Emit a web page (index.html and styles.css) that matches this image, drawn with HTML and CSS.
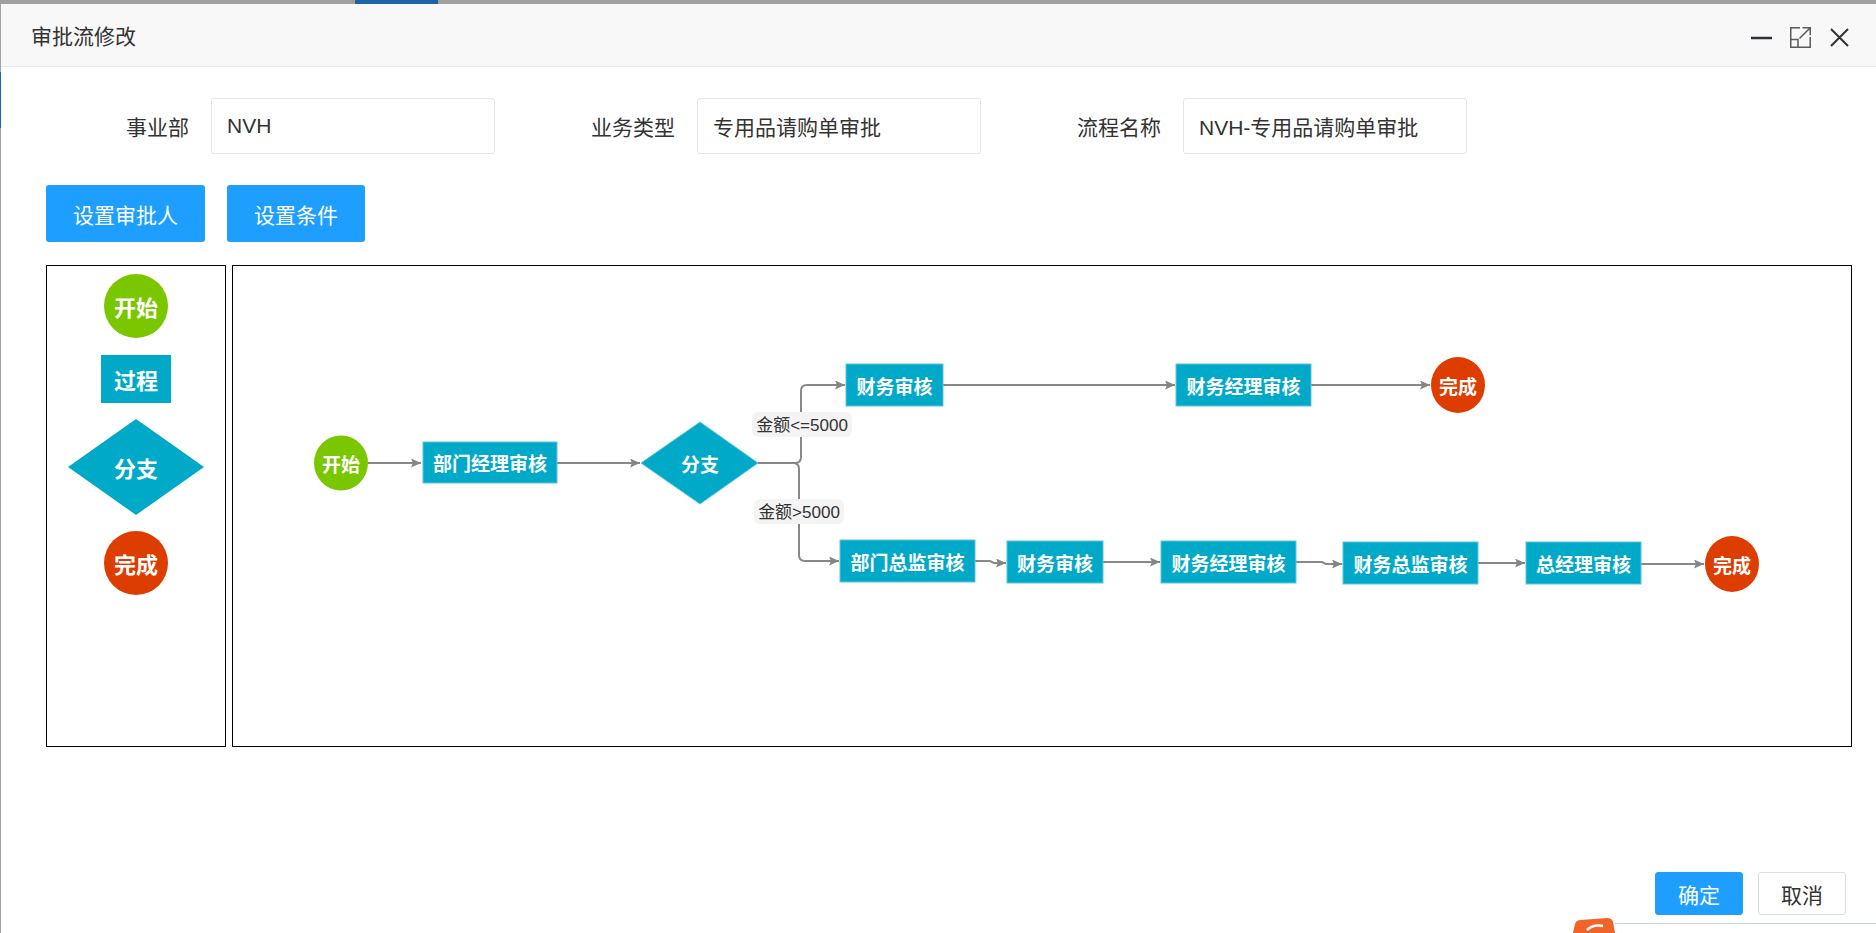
FILE: index.html
```html
<!DOCTYPE html>
<html lang="zh-CN">
<head>
  <meta charset="UTF-8">
  <title>审批流修改</title>
  <link rel="stylesheet" href="styles.css">
</head>
<body>
  <div class="top-strip"></div>
  <div class="dialog">
    <!-- 标题栏 -->
    <div class="dialog-head">
      <span class="dialog-title">审批流修改</span>
      <div class="win-tools">
        <svg class="tool" viewBox="0 0 21 26"><path d="M0 16h21" stroke="#2f2e3b" stroke-width="2.5"/></svg>
        <svg class="tool" viewBox="0 0 21 26" fill="none" stroke="#5b5b5b" stroke-width="1.5">
          <path d="M10 5.75H.75v19.5h19.5V15"/>
          <path d="M.75 17.5H8v7.75"/>
          <path d="M12.5 5.75h7.75v7.5M20.25 5.75 9.5 16.5"/>
        </svg>
        <svg class="tool" viewBox="0 0 21 26"><path d="M2 7l17 17M19 7 2 24" stroke="#333" stroke-width="2"/></svg>
      </div>
    </div>

    <div class="dialog-body">
      <!-- 基本信息 -->
      <div class="form-row">
        <div class="form-item">
          <label class="form-label">事业部</label>
          <input class="form-input" type="text" value="NVH">
        </div>
        <div class="form-item">
          <label class="form-label">业务类型</label>
          <input class="form-input" type="text" value="专用品请购单审批">
        </div>
        <div class="form-item">
          <label class="form-label">流程名称</label>
          <input class="form-input" type="text" value="NVH-专用品请购单审批">
        </div>
      </div>

      <div class="toolbar">
        <button class="btn">设置审批人</button>
        <button class="btn">设置条件</button>
      </div>

      <div class="panels">
        <!-- 左侧图形 -->
        <div class="palette">
          <div class="shape p-start">开始</div>
          <div class="shape p-proc">过程</div>
          <div class="shape p-branch">分支</div>
          <div class="shape p-end">完成</div>
        </div>

        <!-- 流程画布 -->
        <div class="canvas-box">
          <svg class="canvas" viewBox="233 266 1618 480">
            <defs>
              <marker id="arr" viewBox="0 0 10 9" refX="10" refY="4.5" markerWidth="10" markerHeight="9" markerUnits="userSpaceOnUse" orient="auto">
                <path d="M0 0L10 4.5 0 9 2 4.5z" fill="#858585"/>
              </marker>
            </defs>

            <g class="edges">
              <path d="M368 463H421" marker-end="url(#arr)"/>
              <path d="M557 463H640" marker-end="url(#arr)"/>
              <path d="M758 463H795Q801 463 801 457V391Q801 385 807 385H845" marker-end="url(#arr)"/>
              <path d="M758 463H793Q799 463 799 469V555Q799 561 805 561H839" marker-end="url(#arr)"/>
              <path d="M943 385H1175" marker-end="url(#arr)"/>
              <path d="M1311 385H1430" marker-end="url(#arr)"/>
              <path d="M975 561H990L994 563H1006" marker-end="url(#arr)"/>
              <path d="M1103 562H1160" marker-end="url(#arr)"/>
              <path d="M1296 562H1322L1326 564H1342" marker-end="url(#arr)"/>
              <path d="M1478 563H1525" marker-end="url(#arr)"/>
              <path d="M1641 564H1704" marker-end="url(#arr)"/>
            </g>

            <g class="conds">
              <rect x="752" y="412" width="100" height="25" rx="6"/>
              <text x="802" y="425">金额&lt;=5000</text>
              <rect x="754" y="499" width="90" height="25" rx="6"/>
              <text x="799" y="512">金额&gt;5000</text>
            </g>

            <g class="nodes">
              <ellipse class="n-start" cx="341" cy="463" rx="27" ry="27.5"/>
              <text x="341" y="463">开始</text>

              <rect class="n-proc" x="423" y="442" width="134" height="41"/>
              <text x="490" y="462.5">部门经理审核</text>

              <polygon class="n-proc" points="641,463 700,422 758,463 700,504"/>
              <text x="700" y="463">分支</text>

              <rect class="n-proc" x="846" y="364" width="97" height="42"/>
              <text x="894.5" y="385">财务审核</text>
              <rect class="n-proc" x="1176" y="364" width="135" height="42"/>
              <text x="1243.5" y="385">财务经理审核</text>
              <ellipse class="n-end" cx="1458" cy="385" rx="27" ry="28"/>
              <text x="1458" y="385">完成</text>

              <rect class="n-proc" x="840" y="540" width="135" height="42"/>
              <text x="907.5" y="561">部门总监审核</text>
              <rect class="n-proc" x="1007" y="541" width="96" height="42"/>
              <text x="1055" y="562">财务审核</text>
              <rect class="n-proc" x="1161" y="541" width="135" height="42"/>
              <text x="1228.5" y="562">财务经理审核</text>
              <rect class="n-proc" x="1343" y="542" width="135" height="42"/>
              <text x="1410.5" y="563">财务总监审核</text>
              <rect class="n-proc" x="1526" y="542" width="115" height="42"/>
              <text x="1583.5" y="563">总经理审核</text>
              <ellipse class="n-end" cx="1732" cy="564" rx="27" ry="28"/>
              <text x="1732" y="564">完成</text>
            </g>
          </svg>
        </div>
      </div>
    </div>

    <!-- 底部按钮 -->
    <div class="dialog-foot">
      <button class="foot-btn primary">确定</button>
      <button class="foot-btn">取消</button>
    </div>

    <div class="bottom-bar">
      <svg class="ime-badge" viewBox="0 0 42 15">
        <path d="M2 6Q3 2 8 2L34 0Q39 0 40 4L42 15H0z" fill="#f0642a"/>
        <path d="M14 12Q20 6 30 8" stroke="#fff" stroke-width="2.5" fill="none"/>
      </svg>
      <div class="taskline"></div>
    </div>
  </div>
</body>
</html>
```

FILE: styles.css
```css
* {
  box-sizing: border-box;
}

body {
  margin: 0;
  height: 100vh;
  display: flex;
  flex-direction: column;
  overflow: hidden;
  background: #fff;
  color: #333;
  font-family: "Liberation Sans", "Noto Sans CJK SC", sans-serif;
  font-size: 21px;
}

/* 背景窗口露出的边 */
.top-strip {
  height: 4px;
  flex-shrink: 0;
  background: linear-gradient(to right, #a0a0a0 355px, #1d64a6 355px, #1d64a6 438px, #a0a0a0 438px);
}

.dialog {
  flex: 1;
  display: flex;
  flex-direction: column;
  padding-left: 1px;
  background: linear-gradient(to bottom, #a3a3a3 68px, #1d64a6 68px, #1d64a6 124px, #a3a3a3 124px) left top / 1px 100% no-repeat, #fff;
}

/* 标题栏 */
.dialog-head {
  height: 63px;
  flex-shrink: 0;
  display: flex;
  align-items: center;
  justify-content: space-between;
  padding: 0 26px 0 30px;
  background: #f8f8f8;
  border-bottom: 1px solid #eaeaea;
}

.dialog-title {
  font-family: "Noto Sans CJK SC", sans-serif;
  font-size: 21px;
  color: #333;
}

.win-tools {
  display: flex;
  gap: 18px;
}

.tool {
  display: block;
  width: 21px;
  height: 26px;
}

.dialog-body {
  flex: 1;
  padding: 0 24px 0 45px;
}

/* 表单 */
.form-row {
  display: flex;
  gap: 82px;
  margin-top: 31px;
  padding-left: 45px;
}

.form-item {
  display: flex;
  align-items: center;
}

.form-label {
  width: 120px;
  padding-right: 22px;
  text-align: right;
  color: #333;
}

.form-input {
  width: 284px;
  height: 56px;
  padding: 0 15px;
  border: 1px solid #e6e6e6;
  border-radius: 3px;
  background: #fff;
  color: #333;
  font: inherit;
  outline: none;
}

/* 按钮 */
.toolbar {
  display: flex;
  gap: 22px;
  margin-top: 31px;
}

.btn {
  height: 57px;
  padding: 0 27px;
  border: none;
  border-radius: 3px;
  background: #1e9fff;
  color: #fff;
  font: inherit;
  cursor: pointer;
}

/* 图形区 */
.panels {
  display: flex;
  gap: 6px;
  height: 482px;
  margin-top: 23px;
}

.palette {
  width: 180px;
  flex-shrink: 0;
  border: 1px solid #000;
  display: flex;
  flex-direction: column;
  align-items: center;
  gap: 16px;
  padding-top: 8px;
}

.shape {
  display: flex;
  align-items: center;
  justify-content: center;
  color: #fff;
  font-family: "Noto Sans CJK SC", sans-serif;
  font-weight: 700;
  font-size: 22px;
}

.p-start {
  width: 64px;
  height: 64px;
  border-radius: 50%;
  background: #7ac700;
}

.p-proc {
  width: 70px;
  height: 48px;
  margin-top: 1px;
  background: #01a9c9;
}

.p-branch {
  width: 136px;
  height: 96px;
  background: #01a9c9;
  clip-path: polygon(50% 0, 100% 50%, 50% 100%, 0 50%);
}

.p-end {
  width: 64px;
  height: 64px;
  border-radius: 50%;
  background: #de3d00;
}

.canvas-box {
  flex: 1;
  border: 1px solid #000;
}

.canvas {
  display: block;
  width: 100%;
  height: 100%;
}

.edges path {
  fill: none;
  stroke: #888;
  stroke-width: 2;
}

.conds rect {
  fill: #f4f4f4;
}

.conds text {
  fill: #333;
  font-family: "Liberation Sans", "Noto Sans CJK SC", sans-serif;
  font-size: 17px;
  text-anchor: middle;
  dominant-baseline: central;
}

.n-start {
  fill: #7ac700;
}

.n-proc {
  fill: #01a9c9;
  stroke: #5cc6db;
  stroke-width: 1;
}

.n-end {
  fill: #de3d00;
}

.nodes text {
  fill: #fff;
  font-family: "Noto Sans CJK SC", sans-serif;
  font-weight: 700;
  font-size: 19px;
  text-anchor: middle;
  dominant-baseline: central;
}

/* 底部按钮 */
.dialog-foot {
  display: flex;
  justify-content: flex-end;
  gap: 15px;
  padding: 0 30px 3px 0;
}

.foot-btn {
  height: 43px;
  padding: 0 22px;
  border: 1px solid #dedede;
  border-radius: 3px;
  background: #fff;
  color: #333;
  font: inherit;
  cursor: pointer;
}

.foot-btn.primary {
  background: #1e9fff;
  border-color: #1e9fff;
  color: #fff;
}

.bottom-bar {
  height: 15px;
  flex-shrink: 0;
  display: flex;
  justify-content: flex-end;
}

.ime-badge {
  display: block;
  width: 42px;
  height: 15px;
}

.taskline {
  width: 261px;
  margin-top: 5px;
  border-top: 1px solid #c6d6ea;
}
```
